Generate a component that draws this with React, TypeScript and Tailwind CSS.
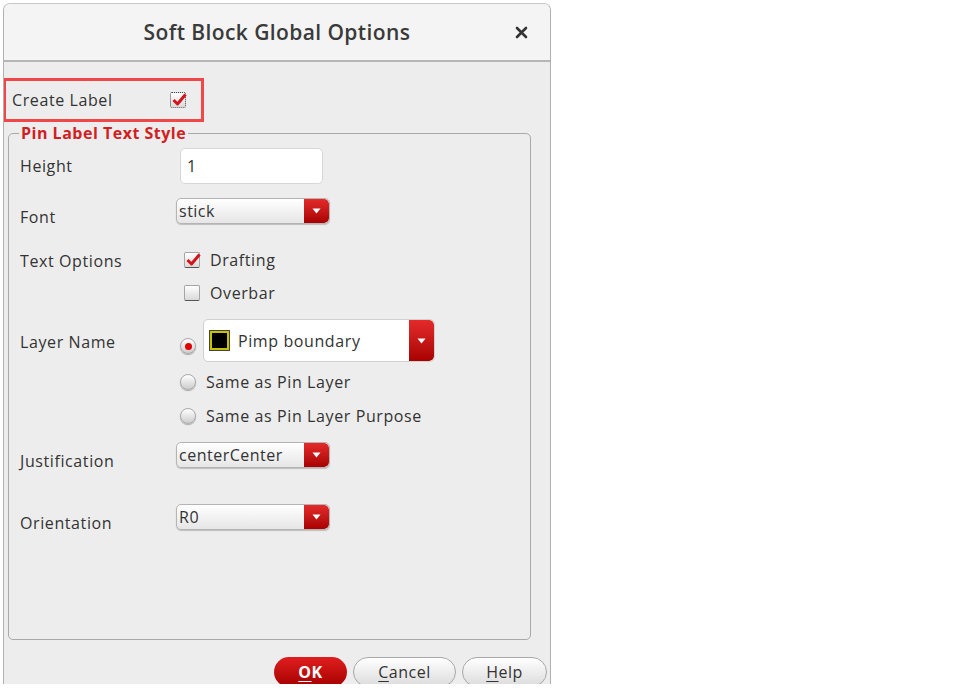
import type { ReactNode } from "react";

function Check({ checked, focus }: { checked?: boolean; focus?: boolean }) {
    return (
        <span
            className={`relative flex h-[16px] w-[16px] items-center justify-center rounded-[2px] bg-gradient-to-b from-white to-[#d9d9d9] ${
                focus ? "border border-dotted border-[#444]" : "border border-[#a5a5a5] border-b-[#555]"
            }`}
        >
            {checked && (
                <svg width="15" height="13" viewBox="0 0 15 13" className="absolute left-[1px] top-[0px]">
                    <path d="M1.5 7 L5.5 11 L13.5 1.5" fill="none" stroke="#d4141a" strokeWidth="3" strokeLinejoin="round" />
                </svg>
            )}
        </span>
    );
}

function Radio({ on }: { on?: boolean }) {
    return (
        <span className="flex h-[16px] w-[16px] items-center justify-center rounded-full border border-[#aaaaaa] bg-gradient-to-b from-white to-[#cdcdcd] shadow-[0_1px_1px_rgba(0,0,0,0.3)]">
            {on && <span className="h-[7px] w-[7px] rounded-full bg-[#e00000]" />}
        </span>
    );
}

function Arrow() {
    return (
        <span className="flex h-full w-[25px] items-center justify-center rounded-r-[5px] bg-gradient-to-b from-[#e42a2a] to-[#a80000]">
            <svg width="9" height="6" viewBox="0 0 9 6">
                <path d="M0.5 0.5 H8.5 L4.5 5.5 Z" fill="white" />
            </svg>
        </span>
    );
}

function Select({ value }: { value: string }) {
    return (
        <div className="flex h-[26px] w-[154px] items-center overflow-hidden rounded-[5px] border border-[#b4b4b4] bg-gradient-to-b from-white to-[#e6e6e6] shadow-[0_1px_1px_rgba(0,0,0,0.2)]">
            <span className="flex-1 pl-[2px] text-[16px] leading-[20px] tracking-[0.5px] text-[#333]">{value}</span>
            <Arrow />
        </div>
    );
}

function Row({ label, labelTop, children, className }: { label: string; labelTop: number; children: ReactNode; className?: string }) {
    return (
        <div className={`flex items-start ${className ?? ""}`}>
            <span className="w-[156px] shrink-0 text-[16px] leading-[20px] tracking-[0.6px] text-[#333]" style={{ marginTop: labelTop }}>
                {label}
            </span>
            {children}
        </div>
    );
}

function Btn({ children, primary, w }: { children: ReactNode; primary?: boolean; w: string }) {
    return (
        <div
            className={`flex h-[30px] ${w} items-center justify-center rounded-full text-[16px] leading-[20px] tracking-[0.5px] ${
                primary
                    ? "bg-gradient-to-b from-[#e11d1d] to-[#a50000] font-bold text-white"
                    : "border border-[#a8a8a8] bg-gradient-to-b from-white to-[#dcdcdc] text-[#333]"
            }`}
        >
            {children}
        </div>
    );
}

const text = "text-[16px] leading-[20px] tracking-[0.6px] text-[#333]";

export default function App() {
    return (
        <div className="h-[694px] w-[963px] overflow-hidden bg-white font-['Open_Sans',sans-serif]">
            <div className="ml-[3px] mt-[3px] flex h-[681px] w-[548px] flex-col overflow-hidden rounded-t-[7px] border-x border-t border-x-[#b0b0b0] border-t-[#c8c8c8] bg-[#ededed]">
                <div className="relative flex h-[58px] shrink-0 items-center justify-center border-b-2 border-[#b5b5b5] bg-[#f4f4f4]">
                    <span className="text-[21px] font-semibold leading-[26px] tracking-[0.4px] text-[#3a3a3a]">Soft Block Global Options</span>
                    <svg width="13" height="13" viewBox="0 0 13 13" className="absolute right-[22px] top-[22px]">
                        <path d="M2 2 L11 11 M11 2 L2 11" stroke="#333" strokeWidth="2.6" strokeLinecap="round" />
                    </svg>
                </div>

                <div className="-ml-[1px] mt-[16px] flex h-[44px] w-[201px] shrink-0 items-center justify-between border-[3px] border-[#f04848] pl-[6px] pr-[15px]">
                    <span className={text}>Create Label</span>
                    <Check checked focus />
                </div>

                <div className="relative ml-[4px] mt-[11px] h-[507px] w-[523px] shrink-0 rounded-[5px] border border-[#a9a9a9] pl-[11px] pt-[14px]">
                    <span className="absolute left-[10px] top-[-11px] bg-[#ededed] px-[2px] text-[16px] font-bold leading-[20px] tracking-[0.5px] text-[#d21f1f]">
                        Pin Label Text Style
                    </span>

                    <Row label="Height" labelTop={8} className="h-[36px]">
                        <div className="ml-[4px] flex h-[36px] w-[143px] items-center rounded-[5px] border border-[#d6d6d6] bg-white pl-[6px] text-[16px] text-[#333]">
                            1
                        </div>
                    </Row>

                    <Row label="Font" labelTop={9} className="mt-[14px] h-[26px]">
                        <Select value="stick" />
                    </Row>

                    <Row label="Text Options" labelTop={1} className="mt-[26px]">
                        <div className="ml-[8px] flex flex-col gap-[13px]">
                            <div className="flex h-[20px] items-center gap-[10px]">
                                <Check checked />
                                <span className={text}>Drafting</span>
                            </div>
                            <div className="flex h-[20px] items-center gap-[10px]">
                                <Check />
                                <span className={text}>Overbar</span>
                            </div>
                        </div>
                    </Row>

                    <Row label="Layer Name" labelTop={13} className="mt-[16px]">
                        <div className="ml-[4px] flex flex-col">
                            <div className="flex items-start gap-[7px]">
                                <span className="mt-[19px]">
                                    <Radio on />
                                </span>
                                <div className="flex h-[43px] w-[232px] items-center overflow-hidden rounded-[5px] border border-[#d0d0d0] bg-white">
                                    <span className="ml-[5px] flex h-[21px] w-[21px] items-center justify-center border border-[#444] bg-[#c8c000]">
                                        <span className="h-[15px] w-[15px] bg-black" />
                                    </span>
                                    <span className={`ml-[8px] flex-1 ${text}`}>Pimp boundary</span>
                                    <Arrow />
                                </div>
                            </div>
                            <div className="mt-[10px] flex h-[20px] items-center gap-[10px]">
                                <Radio />
                                <span className={text}>Same as Pin Layer</span>
                            </div>
                            <div className="mt-[14px] flex h-[20px] items-center gap-[10px]">
                                <Radio />
                                <span className={text}>Same as Pin Layer Purpose</span>
                            </div>
                        </div>
                    </Row>

                    <Row label="Justification" labelTop={9} className="mt-[16px] h-[26px]">
                        <Select value="centerCenter" />
                    </Row>

                    <Row label="Orientation" labelTop={9} className="mt-[36px] h-[26px]">
                        <Select value="R0" />
                    </Row>
                </div>

                <div className="mt-[17px] flex shrink-0 justify-end gap-[6px] pr-[3px]">
                    <Btn primary w="w-[73px]">
                        <span className="underline decoration-1 underline-offset-[3px]">O</span>K
                    </Btn>
                    <Btn w="w-[103px]">
                        <span className="underline decoration-1 underline-offset-[3px]">C</span>ancel
                    </Btn>
                    <Btn w="w-[85px]">
                        <span className="underline decoration-1 underline-offset-[3px]">H</span>elp
                    </Btn>
                </div>
            </div>
        </div>
    );
}
